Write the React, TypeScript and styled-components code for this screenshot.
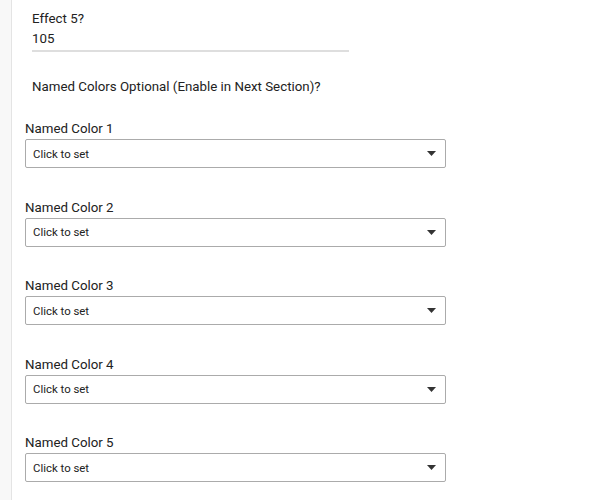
import styled, { createGlobalStyle } from "styled-components";

const GlobalStyle = createGlobalStyle`
  body {
    margin: 0;
    background: #ffffff;
    font-family: Roboto, "Liberation Sans", Arial, sans-serif;
    color: #222222;
  }
`;

const Page = styled.div`
  display: flex;
  min-height: 500px;
`;

const SideStrip = styled.div`
  width: 11px;
  flex-shrink: 0;
  background: #f8f8f8;
  border-right: 1px solid #e4e4e4;
`;

const Content = styled.div`
  flex: 1;
  padding: 9px 0 0 13px;
`;

const Inset = styled.div`
  padding-left: 7px;
`;

const Caption = styled.div`
  font-size: 13.3px;
  line-height: 20px;
  color: #222222;
`;

const ValueInput = styled.div`
  width: 317px;
  font-size: 13.3px;
  line-height: 20px;
  color: #222222;
  padding-bottom: 1px;
  border-bottom: 2px solid #dedede;
`;

const Question = styled.div`
  margin-top: 25px;
  font-size: 13.3px;
  line-height: 20px;
  color: #222222;
`;

const FieldList = styled.div`
  margin-top: 22px;
  display: flex;
  flex-direction: column;
  gap: 29.5px;
`;

const Field = styled.div`
  display: flex;
  flex-direction: column;
`;

const Label = styled.label`
  font-size: 13.3px;
  line-height: 20px;
  color: #222222;
`;

const SelectBox = styled.div`
  box-sizing: border-box;
  width: 421px;
  height: 29px;
  display: flex;
  align-items: center;
  justify-content: space-between;
  padding: 0 9px 0 7px;
  border: 1px solid #ababab;
  border-radius: 2px;
  background: #ffffff;
  font-size: 11.4px;
  color: #222222;
`;

const Caret = styled.svg`
  width: 9px;
  height: 5px;
  display: block;
`;

const colors = [1, 2, 3, 4, 5];

export default function App() {
  return (
    <>
      <GlobalStyle />
      <Page>
        <SideStrip />
        <Content>
          <Inset>
            <Caption>Effect 5?</Caption>
            <ValueInput>105</ValueInput>
            <Question>Named Colors Optional (Enable in Next Section)?</Question>
          </Inset>
          <FieldList>
            {colors.map((n) => (
              <Field key={n}>
                <Label>Named Color {n}</Label>
                <SelectBox>
                  <span>Click to set</span>
                  <Caret viewBox="0 0 9 5">
                    <path d="M0 0 H9 L4.5 5 Z" fill="#333333" />
                  </Caret>
                </SelectBox>
              </Field>
            ))}
          </FieldList>
        </Content>
      </Page>
    </>
  );
}
